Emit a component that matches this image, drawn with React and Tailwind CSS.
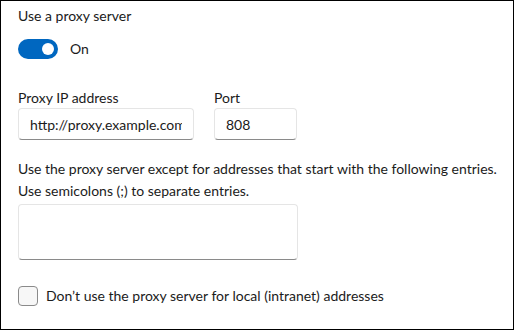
import React, { useState } from "react";

const font = { fontFamily: 'Lato, "Open Sans", sans-serif' };

export default function App() {
    const [enabled, setEnabled] = useState(true);
    const [bypassLocal, setBypassLocal] = useState(false);

    return (
        <div
            className="w-[514px] h-[330px] border border-black bg-white text-[14px] text-[#1b1b1b] px-[17px] pt-[5px]"
            style={font}
        >
            <div className="leading-[20px]">Use a proxy server</div>

            {/* toggle */}
            <div className="flex items-center gap-3 mt-[13px]">
                <button
                    onClick={() => setEnabled((v) => !v)}
                    className={`w-[40px] h-[20px] rounded-full flex items-center px-[4px] ${
                        enabled ? "bg-[#0067c0] justify-end" : "border border-[#868686] justify-start"
                    }`}
                >
                    <span
                        className={`w-[12px] h-[12px] rounded-full ${
                            enabled ? "bg-white" : "bg-[#5d5d5d]"
                        }`}
                    />
                </button>
                <span className="leading-[20px]">{enabled ? "On" : "Off"}</span>
            </div>

            {/* address + port */}
            <div className="flex gap-[20px] mt-[29px]">
                <div className="flex flex-col">
                    <label className="leading-[20px]">Proxy IP address</label>
                    <input
                        defaultValue="http://proxy.example.com"
                        className="w-[176px] h-[32px] px-[11px] rounded-[4px] border border-[#e5e5e5] border-b-[#8a8a8a] bg-white outline-none text-[#1b1b1b]"
                        style={font}
                    />
                </div>
                <div className="flex flex-col">
                    <label className="leading-[20px]">Port</label>
                    <input
                        defaultValue="808"
                        className="w-[83px] h-[32px] px-[11px] rounded-[4px] border border-[#e5e5e5] border-b-[#8a8a8a] bg-white outline-none text-[#1b1b1b]"
                        style={font}
                    />
                </div>
            </div>

            {/* exceptions */}
            <p className="mt-[18px] leading-[22px] whitespace-nowrap">
                Use the proxy server except for addresses that start with the following entries.
                <br />
                Use semicolons (;) to separate entries.
            </p>
            <textarea
                className="block mt-[2px] w-[280px] h-[56px] rounded-[4px] border border-[#e5e5e5] border-b-[#8a8a8a] bg-white outline-none resize-none"
                style={font}
            />

            {/* checkbox */}
            <label className="flex items-center gap-[8px] mt-[26px] cursor-pointer">
                <button
                    onClick={() => setBypassLocal((v) => !v)}
                    className={`w-[20px] h-[20px] rounded-[4px] border ${
                        bypassLocal ? "bg-[#0067c0] border-[#0067c0]" : "bg-[#f7f7f7] border-[#8a8a8a]"
                    }`}
                />
                <span className="leading-[20px]">Don’t use the proxy server for local (intranet) addresses</span>
            </label>
        </div>
    );
}
